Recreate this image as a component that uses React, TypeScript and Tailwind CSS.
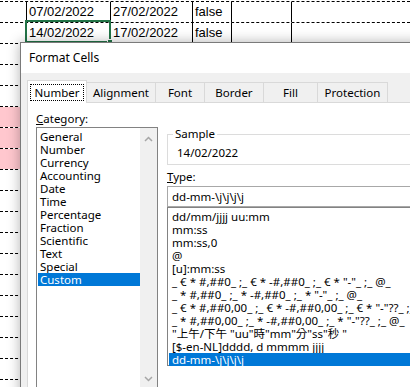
import React from "react";

const rows = Array.from({ length: 19 }, (_, i) => i);

const categories = [
  "General",
  "Number",
  "Currency",
  "Accounting",
  "Date",
  "Time",
  "Percentage",
  "Fraction",
  "Scientific",
  "Text",
  "Special",
  "Custom",
];

const types = [
  "dd/mm/jjjj uu:mm",
  "mm:ss",
  "mm:ss,0",
  "@",
  "[u]:mm:ss",
  '_ € * #,##0_ ;_ € * -#,##0_ ;_ € * "-"_ ;_ @_ ',
  '_ * #,##0_ ;_ * -#,##0_ ;_ * "-"_ ;_ @_ ',
  '_ € * #,##0,00_ ;_ € * -#,##0,00_ ;_ € * "-"??_ ;_ @_ ',
  '_ * #,##0,00_ ;_ * -#,##0,00_ ;_ * "-"??_ ;_ @_ ',
  '"上午/下午 "uu"時"mm"分"ss"秒 "',
  "[$-en-NL]dddd, d mmmm jjjj",
  "dd-mm-\\j\\j\\j\\j",
];

const tabs = [
  { label: "Alignment", w: "w-[69px]" },
  { label: "Font", w: "w-[49px]" },
  { label: "Border", w: "w-[59px]" },
  { label: "Fill", w: "w-[54px]" },
  { label: "Protection", w: "w-[70px]" },
];

function Chevron({ up }: { up?: boolean }) {
  return (
    <svg width="9" height="6" viewBox="0 0 9 6" className="block">
      <path
        d={up ? "M1 5 L4.5 1.5 L8 5" : "M1 1 L4.5 4.5 L8 1"}
        fill="none"
        stroke="#a6a6a6"
        strokeWidth="1.5"
      />
    </svg>
  );
}

export default function App() {
  return (
    <div className="relative w-[410px] h-[387px] overflow-hidden bg-white">
      {/* spreadsheet */}
      <div className="flex flex-col pt-[1px] font-['Liberation_Sans',Arial,sans-serif] text-[13px] text-black">
        {rows.map((i) => (
          <div key={i} className="flex h-[21px] shrink-0 border-t border-dashed border-black">
            <div
              className={`w-[27px] shrink-0 border-r border-black ${
                i >= 5 && i <= 7 ? "bg-[#ffc7ce]" : ""
              }`}
            />
            <div className="relative w-[84px] shrink-0 border-r border-black pl-[2px] leading-[20px]">
              {i === 0 ? "07/02/2022" : i === 1 ? "14/02/2022" : ""}
              {i === 1 && (
                <div className="absolute left-[-2px] top-[-3px] w-[86px] h-[23px] border-2 border-[#217346]">
                  <div className="absolute right-[-4px] bottom-[-4px] w-[6px] h-[6px] bg-[#217346] border border-white" />
                </div>
              )}
            </div>
            <div className="w-[82px] shrink-0 border-r border-black pl-[2px] leading-[20px]">
              {i === 0 ? "27/02/2022" : i === 1 ? "17/02/2022" : ""}
            </div>
            <div className="w-[39px] shrink-0 border-r border-black pl-[2px] leading-[20px]">
              {i <= 1 ? "false" : ""}
            </div>
            <div className="w-[60px] shrink-0 border-r border-black" />
            <div className="flex-1" />
          </div>
        ))}
      </div>

      {/* dialog */}
      <div className="absolute left-[20px] top-[42px] w-[430px] h-[380px] border border-[#7a7a7a] bg-[#f0f0f0] shadow-[0_0_12px_rgba(0,0,0,0.3)] font-['Noto_Sans','Noto_Sans_CJK_TC',sans-serif] text-[11.5px] text-black flex flex-col">
        <div className="h-[30px] shrink-0 bg-white pl-[8px] flex items-center text-[12px]">
          Format Cells
        </div>
        <div className="flex-1 flex flex-col pt-[7px] pl-[6px]">
          {/* tabs */}
          <div className="flex items-end h-[22px] shrink-0">
            <div className="relative z-10 w-[60px] h-[23px] -mb-px bg-white border border-b-0 border-[#d9d9d9] flex items-center justify-center">
              <span className="outline outline-1 outline-dotted outline-black px-[4px] leading-[15px]">
                Number
              </span>
            </div>
            {tabs.map((t) => (
              <div
                key={t.label}
                className={`${t.w} h-[20px] border-t border-r border-[#d9d9d9] bg-[#f0f0f0] flex items-center justify-center`}
              >
                {t.label}
              </div>
            ))}
          </div>
          {/* panel */}
          <div className="flex-1 bg-white border-l border-t border-[#d9d9d9] flex pl-[8px] pt-[8px] gap-[9px]">
            {/* left column */}
            <div className="flex flex-col w-[122px] shrink-0">
              <div className="h-[16px] leading-[15px]">
                <span className="underline">C</span>ategory:
              </div>
              <div className="h-[270px] border border-[#828282] flex">
                <div className="flex-1 flex flex-col pt-[2px] pl-[1px]">
                  {categories.map((c) => (
                    <div
                      key={c}
                      className={`h-[13px] leading-[13px] pl-[2px] ${
                        c === "Custom" ? "bg-[#0078d7] text-white" : ""
                      }`}
                    >
                      {c}
                    </div>
                  ))}
                </div>
                <div className="w-[17px] bg-[#f0f0f0] flex flex-col items-center justify-between pt-[8px] pb-[14px]">
                  <Chevron up />
                  <Chevron />
                </div>
              </div>
            </div>
            {/* right column */}
            <div className="flex-1 flex flex-col pt-[23px]">
              <div className="relative h-[31px] shrink-0 border border-[#dcdcdc] pl-[9px] pt-[11px] leading-[14px]">
                <span className="absolute left-[5px] top-[-8px] bg-white px-[2px] leading-[14px]">
                  Sample
                </span>
                14/02/2022
              </div>
              <div className="h-[15px] shrink-0 mt-[4px] leading-[15px]">
                <span className="underline">T</span>ype:
              </div>
              <div className="h-[21px] shrink-0 mt-[2px] border border-[#a8a8a8] pl-[4px] leading-[19px]">
                {"dd-mm-\\j\\j\\j\\j"}
              </div>
              <div className="h-[159px] shrink-0 border border-[#828282] flex flex-col pt-[2px] pl-[1px]">
                {types.map((t, i) => (
                  <div
                    key={i}
                    className={`h-[13px] leading-[13px] pl-[3px] whitespace-pre ${
                      i === types.length - 1 ? "bg-[#0078d7] text-white" : ""
                    }`}
                  >
                    {t}
                  </div>
                ))}
              </div>
            </div>
          </div>
        </div>
      </div>
    </div>
  );
}
